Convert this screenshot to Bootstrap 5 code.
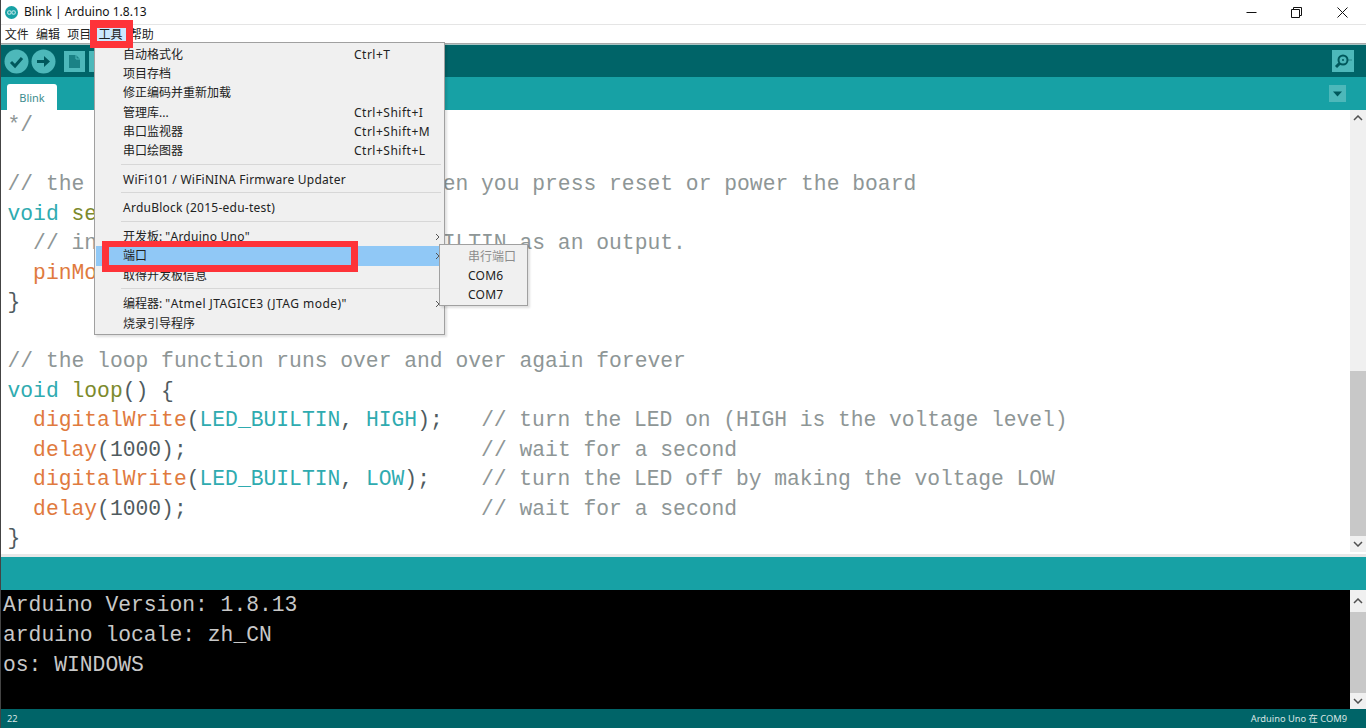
<!DOCTYPE html>
<html lang="zh-CN">
<head>
<meta charset="utf-8">
<title>Blink | Arduino 1.8.13</title>
<link href="https://cdn.jsdelivr.net/npm/bootstrap@5.3.0/dist/css/bootstrap.min.css" rel="stylesheet">
<style>
html,body{height:100%;overflow:hidden}
body{background:#fff;font-family:"Noto Sans","Noto Sans CJK SC",sans-serif;color:#222}
.ide{height:728px;width:1366px;position:relative;border-left:1px solid #444}
.titlebar{height:24px;padding-left:4px;font-size:12px;color:#111}
.title-ico{margin-right:6px}
.win-btns{margin-left:auto;margin-right:1px}
.win-btn{width:45.5px;height:24px}
.menubar{height:20px;border-top:1px solid #e5e5e5;border-bottom:1px solid #a8a8a8;font-size:12px;line-height:18px;font-family:"Noto Sans CJK SC",sans-serif}
.menu-top{padding:0 3.65px;height:18px;color:#222}
.menu-on{background:#cce8ff}
.toolbar{height:33px;background:#006468;border-top:1px solid #a8c4c4;padding-left:3px;padding-right:12px}
.tool-c{width:25px;height:25px;margin-right:2px}
.tabbar{height:33px;background:#17a1a5;padding-left:6px;padding-right:20px}
.tabitem{width:50px;height:26px;background:#fff;border-radius:3px 3px 0 0;margin-top:auto;color:#3c8c8e;font-size:11px;text-align:center;line-height:27px}
.editor-row{height:444px}
.codebox{font-family:"Liberation Mono",monospace;font-size:21.33px;line-height:29.5px;white-space:pre;color:#4f5b60;overflow:hidden;flex:1 1 auto;min-width:0}
.code-ed{padding-left:6.5px;margin-top:1px}
.c-com{color:#8e9696}.c-fn{color:#e07a3e}.c-kw{color:#2fabb0}.c-lp{color:#7c8a2c}
.c-tight{letter-spacing:-.05px}
.sb{width:16px;flex:0 0 16px;background:#f0f0f0}
.sb-btn{height:16px;background:#f0f0f0;flex:0 0 auto}
.sb-btn-con{height:22px}
.sb-track{flex:1 1 auto;background:#f0f0f0}
.sb-thumb{background:#c8c8c8}
.sb-thumb-ed{height:165px}
.sb-end{height:2px;background:#fff}
.divider{height:3px;background:#e8e8e8}
.midbar{height:33px;background:#17a1a5}
.console{height:119px;background:#000}
.code-con{color:#c8c8c8;padding-left:2px;padding-top:1px;background:#000;line-height:29.8px}
.status{height:19px;background:#006468;color:#d8e4e4;font-size:9.3px;padding:0 19px 0 6px}
.popmenu{position:absolute;background:#f0f0f0;border:1px solid #a0a0a0;font-size:12px;color:#222;box-shadow:2px 2px 2px rgba(0,0,0,.12)}
.pop-main{left:93px;top:42px;width:351px;height:293px;padding:2px 1px}
.pop-sub{left:438px;top:244px;width:89px;height:62px;padding:2px 1px}
.pitem{height:19.2px;line-height:19px;padding-left:27px;position:relative;white-space:nowrap}
.pitem-hi{background:#90c8f6}
.pkey{position:absolute;left:258px;top:0;letter-spacing:.5px}
.lat{letter-spacing:.25px}
.lat-wide{letter-spacing:.45px}
.parrow{position:absolute;right:3px;top:6px}
.psep{height:1px;background:#d7d7d7;margin:3.4px 2px 5.2px 25px}
.sub-off{color:#8c8c8c}
.redbox{position:absolute;border:7px solid #fe3339;pointer-events:none}
.red-top{left:89px;top:20px;width:43px;height:28px;border-top-width:8px}
.red-port{left:101px;top:241px;width:256px;height:31px;border-top-width:6px}
</style>
</head>
<body>
<div class="ide">
  <div class="titlebar d-flex align-items-center">
    <svg width="13" height="13" viewBox="0 0 16 16" class="flex-shrink-0 title-ico"><circle cx="8" cy="8" r="8" fill="#17a1a5"/><circle cx="5.400" cy="8" r="2.200" fill="none" stroke="#bfe6e7" stroke-width="1.300"/><circle cx="10.600" cy="8" r="2.200" fill="none" stroke="#bfe6e7" stroke-width="1.300"/></svg>
    <span>Blink | Arduino 1.8.13</span>
    <div class="win-btns d-flex">
      <div class="win-btn d-flex align-items-center justify-content-center"><svg width="11" height="11" viewBox="0 0 11 11"><path d="M0.5 5.500H10.500" stroke="#111" fill="none"/></svg></div>
      <div class="win-btn d-flex align-items-center justify-content-center"><svg width="11" height="11" viewBox="0 0 11 11"><path d="M0.500 2.500H8.500V10.500H0.500ZM2.500 2.500V0.500H10.500V8.500H8.500" stroke="#111" fill="none"/></svg></div>
      <div class="win-btn d-flex align-items-center justify-content-center"><svg width="11" height="11" viewBox="0 0 11 11"><path d="M0.500 0.500L10.500 10.500M10.500 0.500L0.500 10.500" stroke="#111" fill="none"/></svg></div>
    </div>
  </div>
  <div class="menubar d-flex">
    <span class="menu-top">文件</span><span class="menu-top">编辑</span><span class="menu-top">项目</span><span class="menu-top menu-on">工具</span><span class="menu-top">帮助</span>
  </div>
  <div class="toolbar d-flex align-items-center">
    <svg class="tool-c" viewBox="0 0 25 25"><circle cx="12.500" cy="12.500" r="12" fill="#4db8ba"/><path d="M7 13l4 4 7-8" fill="none" stroke="#00585c" stroke-width="3"/></svg>
    <svg class="tool-c" viewBox="0 0 25 25"><circle cx="12.500" cy="12.500" r="12" fill="#4db8ba"/><path d="M6 11h7V7l6 5.500-6 5.500v-4H6z" fill="#00585c"/></svg>
    <svg width="25" height="25" viewBox="0 0 25 25" class="ms-1"><rect x="2" y="2" width="21" height="21" fill="#4db8ba"/><path d="M7 6h7l4 4v9H7z" fill="#1a8286"/><path d="M14 6v4h4" fill="none" stroke="#4db8ba"/></svg>
    <svg width="25" height="25" viewBox="0 0 25 25"><rect x="2" y="2" width="21" height="21" fill="#4db8ba"/></svg>
    <svg width="22" height="22" viewBox="0 0 22 22" class="ms-auto"><rect width="22" height="22" fill="#4db8ba"/><circle cx="11" cy="10" r="4.500" fill="none" stroke="#00585c" stroke-width="2"/><circle cx="11" cy="10" r="1" fill="#00585c"/><path d="M7.500 13.500L4 17" stroke="#00585c" stroke-width="3"/><path d="M16.500 10h3" stroke="#00585c" stroke-dasharray="1 1"/></svg>
  </div>
  <div class="tabbar d-flex">
    <div class="tabitem">Blink</div>
    <svg width="17" height="17" viewBox="0 0 17 17" class="ms-auto align-self-center"><rect width="17" height="17" fill="#4db8ba"/><path d="M4 6.500h9l-4.500 5z" fill="#00585c"/></svg>
  </div>
  <div class="editor-row d-flex overflow-hidden">
    <div class="codebox code-ed"><span class="c-com">*/</span>

<span class="c-com">// the setup function runs once when you press reset or power the board</span>
<span class="c-kw">void</span> <span class="c-lp">setup</span>() {
  <span class="c-com">// initialize digital pin LED_BUILTIN as an output.</span>
  <span class="c-fn">pinMode</span>(<span class="c-kw">LED_BUILTIN</span>, <span class="c-kw">OUTPUT</span>);
}

<span class="c-com">// the loop function runs over and over again forever</span>
<span class="c-kw">void</span> <span class="c-lp">loop</span>() {
  <span class="c-fn">digitalWrite</span>(<span class="c-kw">LED_BUILTIN</span>, <span class="c-kw">HIGH</span>);   <span class="c-com c-tight">// turn the LED on (HIGH is the voltage level)</span>
  <span class="c-fn">delay</span>(1000);                       <span class="c-com">// wait for a second</span>
  <span class="c-fn">digitalWrite</span>(<span class="c-kw">LED_BUILTIN</span>, <span class="c-kw">LOW</span>);    <span class="c-com c-tight">// turn the LED off by making the voltage LOW</span>
  <span class="c-fn">delay</span>(1000);                       <span class="c-com">// wait for a second</span>
}</div>
    <div class="sb d-flex flex-column">
      <div class="sb-btn d-flex align-items-center justify-content-center"><svg width="10" height="6" viewBox="0 0 10 6"><path d="M1 5l4-4 4 4" fill="none" stroke="#505050" stroke-width="1.500"/></svg></div>
      <div class="sb-track d-flex flex-column justify-content-end"><div class="sb-thumb sb-thumb-ed"></div></div>
      <div class="sb-btn d-flex align-items-center justify-content-center"><svg width="10" height="6" viewBox="0 0 10 6"><path d="M1 1l4 4 4-4" fill="none" stroke="#505050" stroke-width="1.500"/></svg></div>
      <div class="sb-end"></div>
    </div>
  </div>
  <div class="divider"></div>
  <div class="midbar"></div>
  <div class="console d-flex overflow-hidden">
    <div class="codebox code-con">Arduino Version: 1.8.13
arduino locale: zh_CN
os: WINDOWS</div>
    <div class="sb d-flex flex-column">
      <div class="sb-btn sb-btn-con d-flex align-items-center justify-content-center"><svg width="10" height="6" viewBox="0 0 10 6"><path d="M1 5l4-4 4 4" fill="none" stroke="#505050" stroke-width="1.500"/></svg></div>
      <div class="sb-track sb-thumb"></div>
      <div class="sb-btn d-flex align-items-center justify-content-center"><svg width="10" height="6" viewBox="0 0 10 6"><path d="M1 1l4 4 4-4" fill="none" stroke="#505050" stroke-width="1.500"/></svg></div>
    </div>
  </div>
  <div class="status d-flex align-items-center justify-content-between"><span>22</span><span>Arduino Uno 在 COM9</span></div>

  <div class="popmenu pop-main">
    <div class="pitem">自动格式化<span class="pkey">Ctrl+T</span></div>
    <div class="pitem">项目存档</div>
    <div class="pitem">修正编码并重新加载</div>
    <div class="pitem">管理库...<span class="pkey">Ctrl+Shift+I</span></div>
    <div class="pitem">串口监视器<span class="pkey">Ctrl+Shift+M</span></div>
    <div class="pitem">串口绘图器<span class="pkey">Ctrl+Shift+L</span></div>
    <div class="psep"></div>
    <div class="pitem lat">WiFi101 / WiFiNINA Firmware Updater</div>
    <div class="psep"></div>
    <div class="pitem lat">ArduBlock (2015-edu-test)</div>
    <div class="psep"></div>
    <div class="pitem">开发板: <span class="lat">"Arduino Uno"</span><svg class="parrow" width="5" height="8" viewBox="0 0 5 8"><path d="M1 1l3 3-3 3" fill="none" stroke="#555"/></svg></div>
    <div class="pitem pitem-hi">端口<svg class="parrow" width="5" height="8" viewBox="0 0 5 8"><path d="M1 1l3 3-3 3" fill="none" stroke="#555"/></svg></div>
    <div class="pitem">取得开发板信息</div>
    <div class="psep"></div>
    <div class="pitem">编程器: <span class="lat-wide">"Atmel JTAGICE3 (JTAG mode)"</span><svg class="parrow" width="5" height="8" viewBox="0 0 5 8"><path d="M1 1l3 3-3 3" fill="none" stroke="#555"/></svg></div>
    <div class="pitem">烧录引导程序</div>
  </div>
  <div class="popmenu pop-sub">
    <div class="pitem sub-off">串行端口</div>
    <div class="pitem lat">COM6</div>
    <div class="pitem lat">COM7</div>
  </div>
  <div class="redbox red-top"></div>
  <div class="redbox red-port"></div>
</div>
<script src="https://cdn.jsdelivr.net/npm/bootstrap@5.3.0/dist/js/bootstrap.bundle.min.js"></script>
</body>
</html>
